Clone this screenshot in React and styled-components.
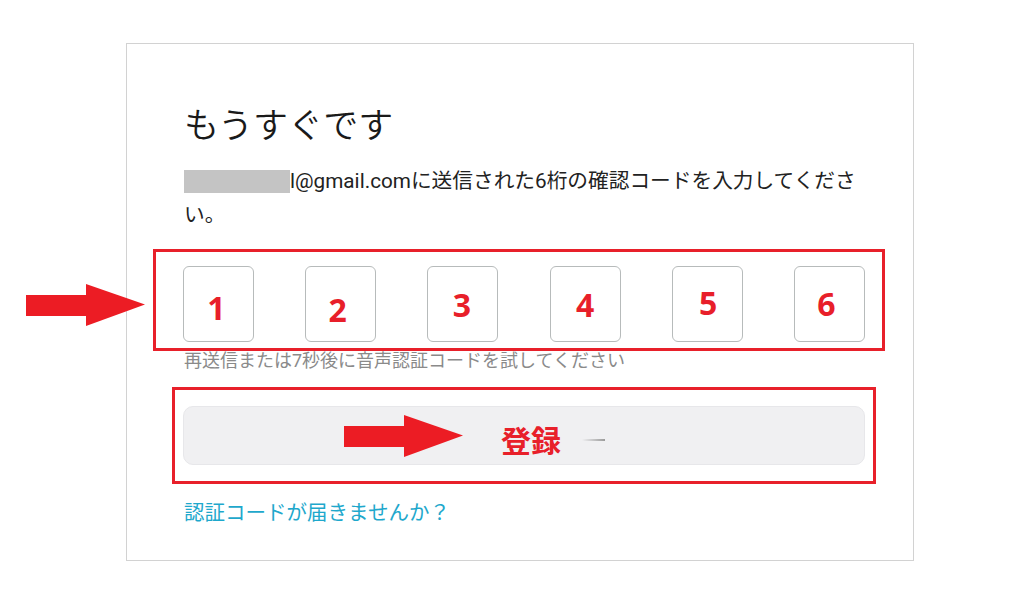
import React from 'react'
import styled, { createGlobalStyle } from 'styled-components'

const GlobalStyle = createGlobalStyle`
  html, body {
    margin: 0;
    padding: 0;
    background: #fff;
  }
  body {
    font-family: Roboto, "Noto Sans CJK JP", sans-serif;
    color: #222;
  }
`

const Page = styled.div`
  width: 1024px;
  height: 602px;
  overflow: hidden;
  padding: 43px 0 0 126px;
  box-sizing: border-box;
`

const Card = styled.div`
  box-sizing: border-box;
  width: 788px;
  height: 518px;
  border: 1px solid #d2d2d2;
  background: #fff;
  padding: 58px 48px 0 56px;
  display: flex;
  flex-direction: column;
`

const Title = styled.h1`
  margin: 0 0 0 1px;
  font-family: "Noto Sans CJK JP DemiLight", "Noto Sans CJK JP", sans-serif;
  font-size: 35px;
  line-height: 42px;
  font-weight: 300;
  color: #1a1a1a;
`

const Lead = styled.p`
  margin: 20px 0 0 1px;
  font-size: 20.7px;
  line-height: 34px;
  color: #222;
`

const Masked = styled.span`
  display: inline-block;
  width: 106px;
  height: 23px;
  background: #c4c4c4;
  vertical-align: -5px;
`

const Annotated = styled.div`
  position: relative;
  margin-top: ${(p) => p.$mt}px;
`

/* red marker frames drawn over the screenshot */
const Marker = styled.div`
  position: absolute;
  top: ${(p) => p.$t}px;
  right: ${(p) => p.$r}px;
  bottom: ${(p) => p.$b}px;
  left: ${(p) => p.$l}px;
  border: 3px solid #e8202a;
  pointer-events: none;
`

const ArrowSvg = styled.svg`
  position: absolute;
  top: ${(p) => p.$t}px;
  left: ${(p) => p.$l}px;
  width: 119px;
  height: 42px;
`

const CodeRow = styled.div`
  display: flex;
  justify-content: space-between;
`

const CodeBox = styled.div`
  box-sizing: border-box;
  width: 71px;
  height: 76px;
  border: 1px solid #b7bbbb;
  border-radius: 6px;
  display: flex;
  align-items: center;
  justify-content: center;
`

const Digit = styled.span`
  font-family: "Open Sans", sans-serif;
  font-weight: 700;
  font-size: 32px;
  line-height: 1;
  color: #e81f2a;
  transform: translate(${(p) => p.$dx}px, ${(p) => p.$dy}px);
`

const Hint = styled.p`
  margin: 7px 0 0 1px;
  font-size: 18px;
  line-height: 24px;
  color: #8a8a8a;
`

const SubmitButton = styled.div`
  box-sizing: border-box;
  height: 59px;
  border: 1px solid #e7e7ea;
  border-radius: 10px;
  background: #f0f0f2;
  display: flex;
  align-items: center;
  justify-content: center;
  padding-left: 58px;
  gap: 21px;
`

const ButtonLabel = styled.span`
  font-family: "Noto Sans CJK JP", sans-serif;
  font-weight: 700;
  font-size: 30px;
  color: #e8202a;
  transform: translateY(3px);
`

const Dash = styled.span`
  width: 23px;
  height: 2px;
  margin-top: 8px;
  background: linear-gradient(90deg, #f0f0f2, #9a9a9a);
`

const Link = styled.a`
  margin: 34px 0 0 1px;
  font-size: 20.5px;
  line-height: 28px;
  color: #1ea8cc;
  text-decoration: none;
  align-self: flex-start;
`

const Arrow = ({ top, left }) => (
  <ArrowSvg $t={top} $l={left} viewBox="0 0 119 42">
    <rect x="0" y="11" width="61" height="21" fill="#ec1c24" />
    <polygon points="60,0 119,20.5 60,42" fill="#ec1c24" />
  </ArrowSvg>
)

const digits = [
  { n: '1', dx: -2, dy: 4 },
  { n: '2', dx: -3, dy: 6 },
  { n: '3', dx: -1, dy: 1 },
  { n: '4', dx: 0, dy: 1 },
  { n: '5', dx: 1, dy: -1 },
  { n: '6', dx: -3, dy: 0 },
]

export default function App() {
  return (
    <>
      <GlobalStyle />
      <Page>
        <Card>
          <Title>もうすぐです</Title>
          <Lead>
            <Masked />
            l@gmail.comに送信された6桁の確認コードを入力してください。
          </Lead>
          <Annotated $mt={34}>
            <CodeRow>
              {digits.map((d) => (
                <CodeBox key={d.n}>
                  <Digit $dx={d.dx} $dy={d.dy}>{d.n}</Digit>
                </CodeBox>
              ))}
            </CodeRow>
            <Marker $t={-17} $r={-20} $b={-9} $l={-30} />
            <Arrow top={18} left={-157} />
          </Annotated>
          <Hint>再送信または7秒後に音声認証コードを試してください</Hint>
          <Annotated $mt={33}>
            <SubmitButton>
              <ButtonLabel>登録</ButtonLabel>
              <Dash />
            </SubmitButton>
            <Marker $t={-19} $r={-11} $b={-19} $l={-11} />
            <Arrow top={9} left={161} />
          </Annotated>
          <Link href="#">認証コードが届きませんか？</Link>
        </Card>
      </Page>
    </>
  )
}
